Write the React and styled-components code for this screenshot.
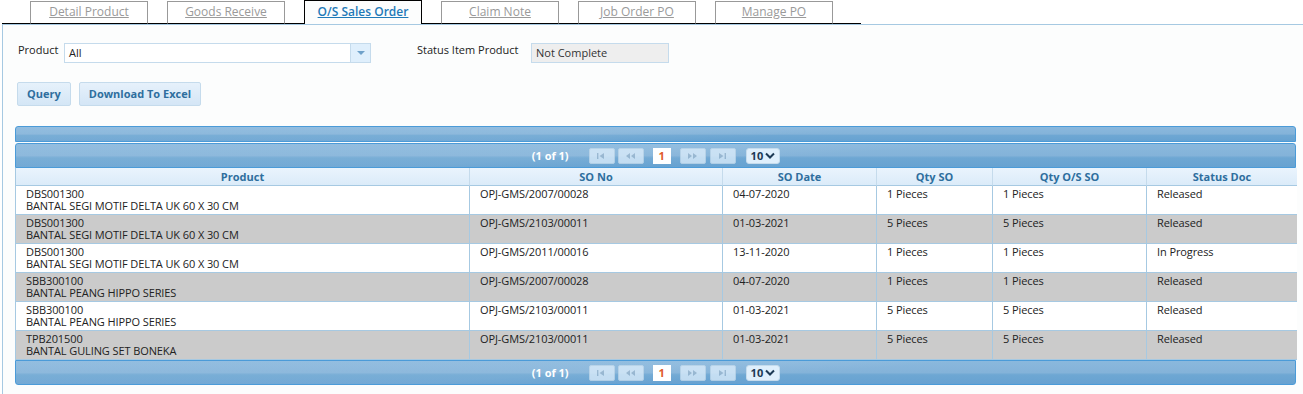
import React from 'react';
import styled, { createGlobalStyle } from 'styled-components';

const GlobalStyle = createGlobalStyle`
  body {
    margin: 0;
    background: #ffffff;
    font-family: "Open Sans", "DejaVu Sans", sans-serif;
    font-size: 11px;
    color: #222222;
  }
`;

const Page = styled.div`
  width: 1303px;
  height: 394px;
  overflow: hidden;
`;

const TabBar = styled.div`
  display: flex;
  align-items: flex-end;
  height: 24px;
  padding-left: 30px;
  box-sizing: border-box;
`;

const TabSpacer = styled.div`
  width: ${p => p.w}px;
  height: 23px;
  border-bottom: 1px solid #000;
`;

const LeadSpacer = styled.div`
  margin-left: -28px;
  width: 28px;
  height: 23px;
  border-bottom: 1px solid #000;
`;

const Tab = styled.a`
  display: flex;
  align-items: center;
  justify-content: center;
  width: 118px;
  height: ${p => (p.active ? '24px' : '23px')};
  box-sizing: border-box;
  border: 1px solid ${p => (p.active ? '#000' : '#999')};
  border-bottom: ${p => (p.active ? 'none' : '1px solid #000')};
  background: ${p => (p.active ? '#fcfdfd' : '#fff')};
  color: ${p => (p.active ? '#1f7ab8' : '#9a9a9a')};
  font-size: 12px;
  font-weight: ${p => (p.active ? 600 : 400)};
  text-decoration: underline;
  padding-bottom: 2px;
`;

const Panel = styled.div`
  margin-left: 2px;
  border-top: 1px solid #a6c9e2;
  border-left: 1px solid #a6c9e2;
  background: #fcfdfd;
  padding: 18px 0 0 12px;
  height: 400px;
  box-sizing: border-box;
`;

const FormRow = styled.div`
  display: flex;
  align-items: flex-start;
  height: 20px;
`;

const Label = styled.span`
  font-size: 11px;
  color: #222;
  margin-top: -1px;
  margin-left: ${p => p.ml || 0}px;
  width: ${p => p.w}px;
`;

const SelectBox = styled.div`
  display: flex;
  width: 307px;
  height: 20px;
  box-sizing: border-box;
  border: 1px solid #c5dbec;
  background: #fff;
  margin-right: 46px;
`;

const SelectText = styled.span`
  flex: 1;
  padding: 1px 4px;
  font-size: 11px;
`;

const SelectArrow = styled.span`
  width: 19px;
  border-left: 1px solid #c5dbec;
  background: #dfeffc;
  display: flex;
  align-items: center;
  justify-content: center;
  &::after {
    content: '';
    border-left: 4px solid transparent;
    border-right: 4px solid transparent;
    border-top: 4px solid #6fa1c9;
  }
`;

const ReadOnlyInput = styled.div`
  width: 138px;
  height: 20px;
  box-sizing: border-box;
  border: 1px solid #c5dbec;
  background: #eeeeee;
  padding: 1px 4px;
  font-size: 11px;
  color: #333;
`;

const ButtonRow = styled.div`
  display: flex;
  gap: 8px;
  margin-top: 19px;
  margin-left: 2px;
`;

const Button = styled.button`
  height: 24px;
  padding: 0 9px 2px;
  border: 1px solid #c5dbec;
  border-radius: 2px;
  background: linear-gradient(#e6f1fb, #d4e6f6);
  color: #2e6e9e;
  font-family: inherit;
  font-size: 11px;
  font-weight: 700;
`;

const Table = styled.div`
  margin-top: 20px;
  width: 1281px;
`;

const gloss = `
  background:
    linear-gradient(176deg, rgba(255,255,255,0.08) 0 45%, rgba(0,0,0,0) 60%),
    linear-gradient(#8ab8dd, #84b3d9 50%, #6ea7d3 60%, #67a2d1);
`;

const Caption = styled.div`
  height: 16px;
  box-sizing: border-box;
  border: 1px solid #4b9bd8;
  border-radius: 3px 3px 0 0;
  ${gloss}
`;

const Paginator = styled.div`
  display: flex;
  align-items: center;
  justify-content: center;
  height: 25px;
  box-sizing: border-box;
  border: 1px solid #4b9bd8;
  border-radius: ${p => (p.bottom ? '0 0 3px 3px' : '3px 3px 0 0')};
  margin-top: ${p => (p.bottom ? '0' : '1px')};
  ${gloss}
  padding-left: 1px;
`;

const PageInfo = styled.span`
  color: #fff;
  font-weight: 700;
  font-size: 11px;
  margin-right: 20px;
`;

const PageBtn = styled.span`
  display: flex;
  align-items: center;
  justify-content: center;
  width: 26px;
  height: 16px;
  box-sizing: border-box;
  border: 1px solid #c5dbec;
  border-radius: 2px;
  background: #dfeffc;
  margin-right: ${p => p.mr ?? 3}px;
  opacity: 0.75;
`;

const PageNum = styled.span`
  display: flex;
  align-items: center;
  justify-content: center;
  width: 18px;
  height: 16px;
  background: #fff;
  color: #e05a2a;
  font-weight: 700;
  font-size: 11px;
  margin: 0 9px 0 6px;
`;

const RowsSelect = styled.span`
  display: flex;
  align-items: center;
  gap: 2px;
  height: 14px;
  padding: 0 4px;
  margin-left: 10px;
  border: 1px solid #c5dbec;
  border-radius: 3px;
  background: #dfeffc;
  color: #1d3a55;
  font-weight: 700;
  font-size: 11px;
`;

const Grid = styled.div`
  display: grid;
  grid-template-columns: 454px 253px 154px 116px 154px 150px;
  border-left: 1px solid #a6c9e2;
  border-right: 1px solid #a6c9e2;
`;

const HeadCell = styled.div`
  height: 18px;
  box-sizing: border-box;
  display: flex;
  align-items: center;
  justify-content: center;
  background: linear-gradient(#eaf4fd, #dbebf9);
  border-right: ${p => (p.last ? 'none' : '1px solid #c5dbec')};
  border-bottom: 1px solid #a6c9e2;
  color: #2e6e9e;
  font-weight: 700;
  font-size: 11px;
`;

const Cell = styled.div`
  height: 29px;
  box-sizing: border-box;
  padding: 2px 9px 0 10px;
  background: ${p => (p.odd ? '#cbcbcb' : '#ffffff')};
  border-right: ${p => (p.last ? 'none' : '1px solid #a6c9e2')};
  border-bottom: 1px solid #a6c9e2;
  font-size: 11px;
  line-height: 12px;
  color: #222;
  white-space: nowrap;
  letter-spacing: -0.1px;
`;

const CellLine = styled.div`
  height: 12px;
`;

const Icon = ({ kind }) => {
  const c = '#9fb9cf';
  const shapes = {
    first: (
      <>
        <rect x="1" y="1" width="1.4" height="6" fill={c} />
        <path d="M8 1 L3.5 4 L8 7 Z" fill={c} />
      </>
    ),
    prev: (
      <>
        <path d="M5 1 L1 4 L5 7 Z" fill={c} />
        <path d="M10 1 L6 4 L10 7 Z" fill={c} />
      </>
    ),
    next: (
      <>
        <path d="M1 1 L5 4 L1 7 Z" fill={c} />
        <path d="M6 1 L10 4 L6 7 Z" fill={c} />
      </>
    ),
    last: (
      <>
        <path d="M2 1 L6.5 4 L2 7 Z" fill={c} />
        <rect x="7.6" y="1" width="1.4" height="6" fill={c} />
      </>
    ),
  };
  return (
    <svg width="11" height="8" viewBox="0 0 11 8">
      {shapes[kind]}
    </svg>
  );
};

const Pager = ({ bottom }) => (
  <Paginator bottom={bottom}>
    <PageInfo>(1 of 1)</PageInfo>
    <PageBtn><Icon kind="first" /></PageBtn>
    <PageBtn><Icon kind="prev" /></PageBtn>
    <PageNum>1</PageNum>
    <PageBtn mr={4}><Icon kind="next" /></PageBtn>
    <PageBtn mr={0}><Icon kind="last" /></PageBtn>
    <RowsSelect>
      10
      <svg width="10" height="7" viewBox="0 0 10 7">
        <path d="M1 1.5 L5 5.5 L9 1.5" stroke="#1d3a55" strokeWidth="2" fill="none" />
      </svg>
    </RowsSelect>
  </Paginator>
);

const tabs = ['Detail Product', 'Goods Receive', 'O/S Sales Order', 'Claim Note', 'Job Order PO', 'Manage PO'];

const columns = ['Product', 'SO No', 'SO Date', 'Qty SO', 'Qty O/S SO', 'Status Doc'];

const rows = [
  ['DBS001300', 'BANTAL SEGI MOTIF DELTA UK 60 X 30 CM', 'OPJ-GMS/2007/00028', '04-07-2020', '1 Pieces', '1 Pieces', 'Released'],
  ['DBS001300', 'BANTAL SEGI MOTIF DELTA UK 60 X 30 CM', 'OPJ-GMS/2103/00011', '01-03-2021', '5 Pieces', '5 Pieces', 'Released'],
  ['DBS001300', 'BANTAL SEGI MOTIF DELTA UK 60 X 30 CM', 'OPJ-GMS/2011/00016', '13-11-2020', '1 Pieces', '1 Pieces', 'In Progress'],
  ['SBB300100', 'BANTAL PEANG HIPPO SERIES', 'OPJ-GMS/2007/00028', '04-07-2020', '1 Pieces', '1 Pieces', 'Released'],
  ['SBB300100', 'BANTAL PEANG HIPPO SERIES', 'OPJ-GMS/2103/00011', '01-03-2021', '5 Pieces', '5 Pieces', 'Released'],
  ['TPB201500', 'BANTAL GULING SET BONEKA', 'OPJ-GMS/2103/00011', '01-03-2021', '5 Pieces', '5 Pieces', 'Released'],
];

export default function App() {
  return (
    <Page>
      <GlobalStyle />
      <TabBar>
        <LeadSpacer />
        {tabs.map((t, i) => (
          <React.Fragment key={t}>
            <Tab active={i === 2}>{t}</Tab>
            <TabSpacer w={i === tabs.length - 1 ? 28 : 19} />
          </React.Fragment>
        ))}
      </TabBar>
      <Panel>
        <FormRow>
          <Label w={46} ml={3}>Product</Label>
          <SelectBox>
            <SelectText>All</SelectText>
            <SelectArrow />
          </SelectBox>
          <Label w={114}>Status Item Product</Label>
          <ReadOnlyInput>Not Complete</ReadOnlyInput>
        </FormRow>
        <ButtonRow>
          <Button>Query</Button>
          <Button>Download To Excel</Button>
        </ButtonRow>
        <Table>
          <Caption />
          <Pager />
          <Grid>
            {columns.map((c, i) => (
              <HeadCell key={c} last={i === columns.length - 1}>{c}</HeadCell>
            ))}
            {rows.map((r, ri) => (
              <React.Fragment key={ri}>
                <Cell odd={ri % 2 === 1}>
                  <CellLine>{r[0]}</CellLine>
                  <CellLine>{r[1]}</CellLine>
                </Cell>
                {r.slice(2).map((v, ci) => (
                  <Cell key={ci} odd={ri % 2 === 1} last={ci === 4}>{v}</Cell>
                ))}
              </React.Fragment>
            ))}
          </Grid>
          <Pager bottom />
        </Table>
      </Panel>
    </Page>
  );
}
